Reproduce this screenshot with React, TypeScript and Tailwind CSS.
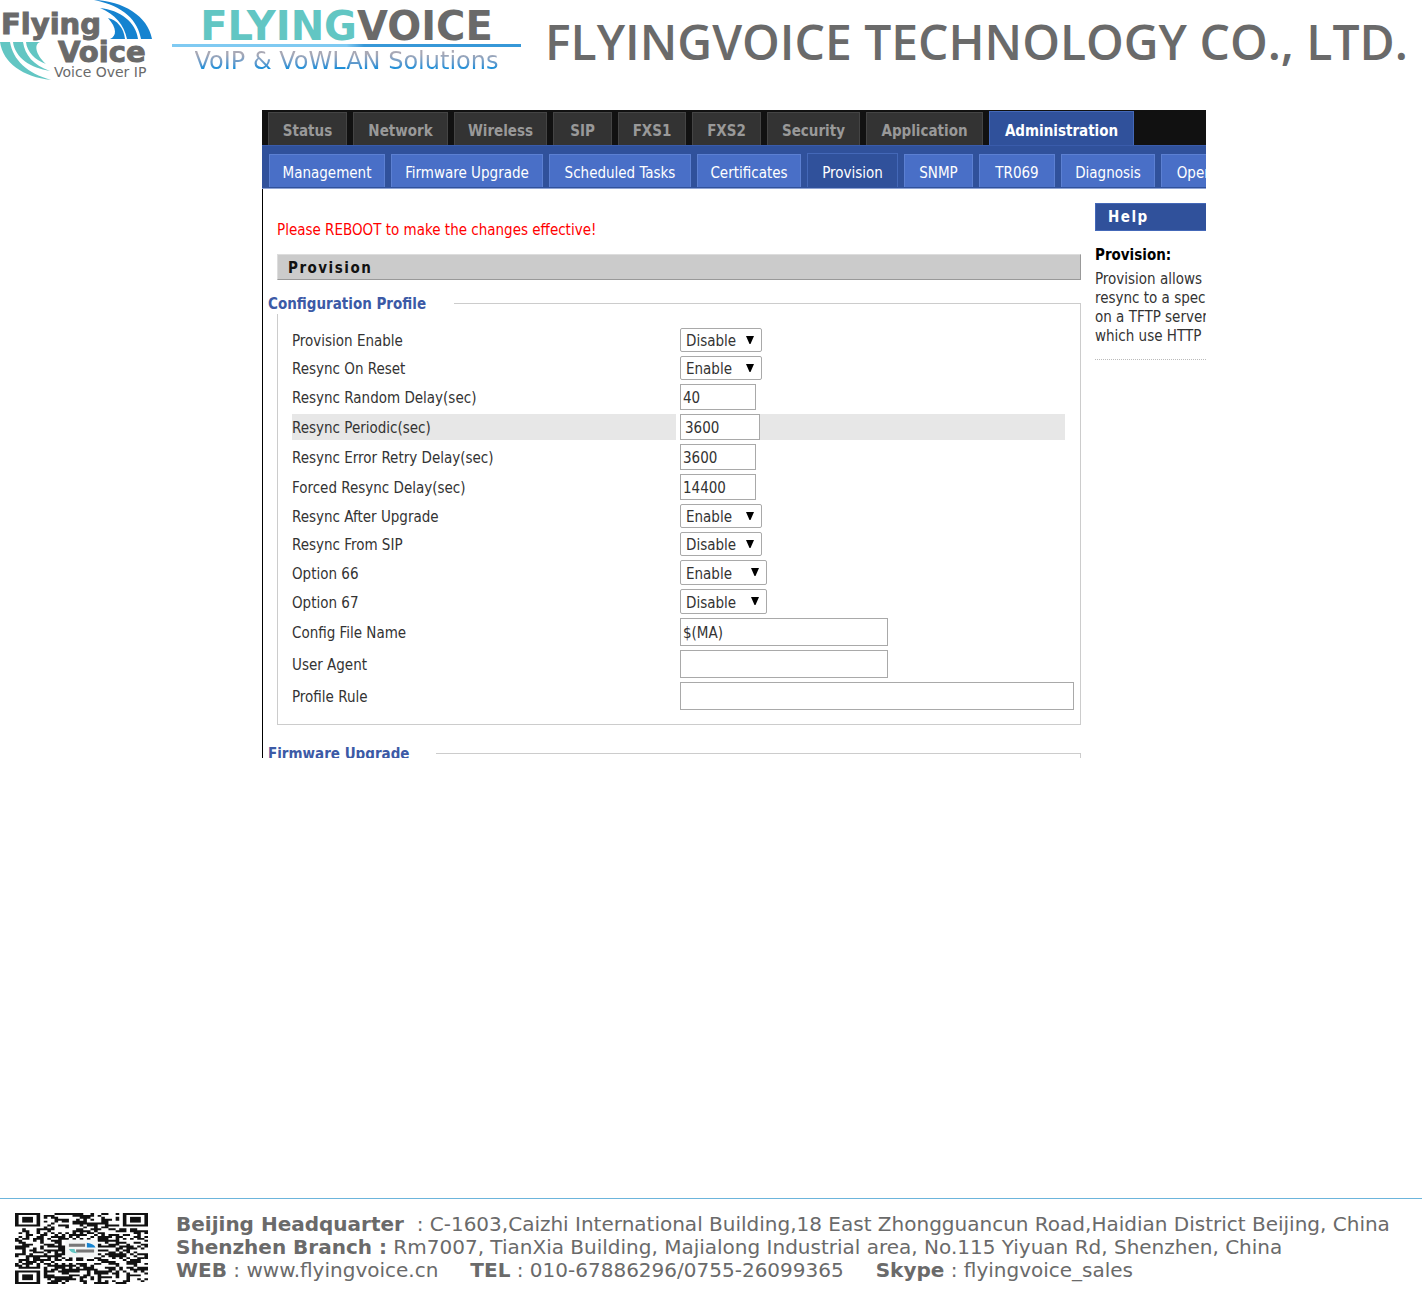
import { useState } from "react";

const mainTabs = [
  { label: "Status", width: "w-[79px]" },
  { label: "Network", width: "w-[95px]" },
  { label: "Wireless", width: "w-[93px]" },
  { label: "SIP", width: "w-[59px]" },
  { label: "FXS1", width: "w-[68px]" },
  { label: "FXS2", width: "w-[69px]" },
  { label: "Security", width: "w-[93px]" },
  { label: "Application", width: "w-[117px]" },
  { label: "Administration", width: "w-[145px]" },
];

const subTabs = [
  { label: "Management", width: "w-[116px]" },
  { label: "Firmware Upgrade", width: "w-[152px]" },
  { label: "Scheduled Tasks", width: "w-[142px]" },
  { label: "Certificates", width: "w-[104px]" },
  { label: "Provision", width: "w-[91px]" },
  { label: "SNMP", width: "w-[69px]" },
  { label: "TR069", width: "w-[76px]" },
  { label: "Diagnosis", width: "w-[94px]" },
  { label: "Operating Mode", width: "w-[140px]" },
];

type Field = {
  id: string;
  label: string;
  kind: "select" | "text";
  value: string;
  size: string;
  active?: boolean;
};

const fields: Field[] = [
  { id: "provision-enable", label: "Provision Enable", kind: "select", value: "Disable", size: "w-[82px] h-6" },
  { id: "resync-reset", label: "Resync On Reset", kind: "select", value: "Enable", size: "w-[82px] h-6" },
  { id: "resync-random", label: "Resync Random Delay(sec)", kind: "text", value: "40", size: "w-[76px] h-[26px]" },
  { id: "resync-periodic", label: "Resync Periodic(sec)", kind: "text", value: "3600", size: "w-20 h-[26px]", active: true },
  { id: "resync-error", label: "Resync Error Retry Delay(sec)", kind: "text", value: "3600", size: "w-[76px] h-[26px]" },
  { id: "forced-resync", label: "Forced Resync Delay(sec)", kind: "text", value: "14400", size: "w-[76px] h-[26px]" },
  { id: "resync-upgrade", label: "Resync After Upgrade", kind: "select", value: "Enable", size: "w-[82px] h-6" },
  { id: "resync-sip", label: "Resync From SIP", kind: "select", value: "Disable", size: "w-[82px] h-6" },
  { id: "option-66", label: "Option 66", kind: "select", value: "Enable", size: "w-[87px] h-[25px]" },
  { id: "option-67", label: "Option 67", kind: "select", value: "Disable", size: "w-[87px] h-[25px]" },
  { id: "config-file", label: "Config File Name", kind: "text", value: "$(MA)", size: "w-52 h-7" },
  { id: "user-agent", label: "User Agent", kind: "text", value: "", size: "w-52 h-7" },
  { id: "profile-rule", label: "Profile Rule", kind: "text", value: "", size: "w-[394px] h-7" },
];

function SwooshLogo() {
  return (
    <svg viewBox="0 0 156 80" className="w-[156px] h-20 shrink-0" role="img" aria-label="Flying Voice">
      <g fill="#1583d0">
        <path d="M94 0 C123 1 148 16 152 39 L141 39 C138 21 124 6 94 0Z" />
        <path d="M100 8 C120 10 136 22 138 39 L127 39 C124 25 115 14 100 8Z" />
        <path d="M108 18 C117 20 124 28 125 39 L110 39 C117 36 117 28 108 18Z" />
      </g>
      <g fill="#62c6c3">
        <path d="M0 42 L10 42 C13 60 27 73 51 80 C23 77 3 63 0 42Z" />
        <path d="M13 42 L23 42 C25 55 33 65 50 71 C31 68 15 58 13 42Z" />
        <path d="M26 42 L40 42 C34 44 35 54 46 64 C35 60 27 52 26 42Z" />
      </g>
      <g
        fill="#6a6a6a"
        stroke="#6a6a6a"
        strokeWidth="1"
        fontFamily="'DejaVu Sans', sans-serif"
        fontWeight="700"
        fontSize="29"
      >
        <text x="1" y="34">Flying</text>
        <text x="58" y="62">Voice</text>
      </g>
      <text x="54" y="77" fontSize="14" fill="#6a6a6a" fontFamily="'DejaVu Sans', sans-serif">
        Voice Over IP
      </text>
    </svg>
  );
}

function QrCode() {
  const size = 37;
  const path: string[] = [];
  let seed = 7007;
  const isFinder = (x: number, y: number) =>
    (x < 8 && y < 8) || (x > size - 9 && y < 8) || (x < 8 && y > size - 9);

  for (let y = 0; y < size; y++) {
    for (let x = 0; x < size; x++) {
      seed = (seed * 1103515245 + 12345) % 2147483648;
      const label = x > 13 && x < 23 && y > 13 && y < 23;
      if (!isFinder(x, y) && !label && seed / 2147483648 > 0.48) path.push(`M${x} ${y}h1v1h-1z`);
    }
  }

  return (
    <svg
      viewBox="0 0 37 37"
      preserveAspectRatio="none"
      className="w-[133px] h-[71px] shrink-0"
      role="img"
      aria-label="QR code"
    >
      <path d={path.join("")} fill="#111" />
      {[[0, 0], [30, 0], [0, 30]].map(([x, y]) => (
        <g key={`${x}-${y}`} fill="#111">
          <path fillRule="evenodd" d={`M${x} ${y}h7v7h-7zM${x + 1} ${y + 1}v5h5v-5z`} />
          <rect x={x + 2} y={y + 2} width="3" height="3" />
        </g>
      ))}
      <rect x="14" y="14" width="9" height="9" rx="1" fill="#f4f6f6" />
      <g fill="#777">
        <rect x="15" y="16" width="4.5" height="1.6" />
        <rect x="17" y="19" width="5" height="1.6" />
      </g>
      <path d="M20 15.5Q22 16 22.4 18H20z" fill="#1583d0" />
      <path d="M15 18.8h1.6q0 1.6 .8 2.2q-2 0-2.4-2.2z" fill="#62c6c3" />
    </svg>
  );
}

function FieldRow({ field }: { field: Field }) {
  const [value, setValue] = useState(field.value);
  const shade = field.active ? "bg-[#e7e7e7]" : "";

  return (
    <div className="flex gap-1">
      <label htmlFor={field.id} className={`w-96 shrink-0 flex items-center pt-0.5 ${shade}`}>
        {field.label}
      </label>
      <div className="flex-1 min-w-0 flex">
        {field.kind === "select" ? (
          <div className="relative">
            <select
              id={field.id}
              value={value}
              onChange={(e) => setValue(e.target.value)}
              className={`block appearance-none rounded-xs border border-[#a9a9a9] bg-white pl-[5px] pt-0.5 ${field.size}`}
            >
              <option>Enable</option>
              <option>Disable</option>
            </select>
            <svg viewBox="0 0 8 8" className="pointer-events-none absolute right-2 top-2 size-2">
              <path d="M0 0h8L4.500 8h-1z" fill="#000" />
            </svg>
          </div>
        ) : (
          <input
            id={field.id}
            type="text"
            value={value}
            onChange={(e) => setValue(e.target.value)}
            className={`block shrink-0 border border-[#a9a9a9] bg-white pt-0.5 ${field.active ? "px-1" : "px-0.5"} ${field.size}`}
          />
        )}
        {field.active && <div className="flex-1 bg-[#e7e7e7]" />}
      </div>
    </div>
  );
}

export default function App() {
  const [mainTab, setMainTab] = useState("Administration");
  const [subTab, setSubTab] = useState("Provision");

  return (
    <div className="min-h-screen flex flex-col bg-white">
      {/* Letterhead */}
      <header className="flex items-start">
        <SwooshLogo />
        <div className="ml-4 w-[349px] shrink-0 flex flex-col items-center pt-2 font-['DejaVu_Sans',sans-serif]">
          <div className="text-[40px] leading-9 font-bold text-[#6a6a6a]">
            <span className="text-[#62c6c3]">FLYING</span>VOICE
          </div>
          <div className="h-[3px] w-full bg-linear-to-r from-[#7fcaf2] from-50% to-[#3698d8] to-55%" />
          <div className="text-[24px] leading-7 bg-linear-to-b from-[#a9a9b5] from-25% to-[#1b8fd8] to-75% bg-clip-text text-transparent">
            VoIP &amp; VoWLAN Solutions
          </div>
        </div>
        <h1 className="ml-6 pt-4 text-[48px] leading-[52px] font-semibold whitespace-nowrap text-[#6a6a6a] font-['Open_Sans',sans-serif]">
          FLYINGVOICE TECHNOLOGY CO., LTD.
        </h1>
      </header>

      {/* Device admin page */}
      <main className="mt-[30px] pl-[262px] pr-[219px] text-[15px] leading-5 text-[#333] font-['DejaVu_Sans_Condensed','DejaVu_Sans',sans-serif]">
        <div className="h-[648px] overflow-hidden">
          <nav className="flex items-end gap-1.5 bg-[#111] pl-1.5 h-[35px]">
            {mainTabs.map((tab) => (
              <button
                key={tab.label}
                onClick={() => setMainTab(tab.label)}
                className={`shrink-0 pt-1 font-bold border border-b-0 ${tab.width} ${
                  tab.label === mainTab
                    ? "h-[34px] bg-[#30519b] border-[#4468b8] text-white"
                    : "h-[33px] bg-[#333] border-[#444] text-[#999]"
                }`}
              >
                {tab.label}
              </button>
            ))}
          </nav>
          <nav className="flex items-end gap-1.5 bg-[#30519b] border-t border-b border-t-[#3a5cab] border-b-[#8ea3d4] pl-[7px] pb-px h-11">
            {subTabs.map((tab) => (
              <button
                key={tab.label}
                onClick={() => setSubTab(tab.label)}
                className={`shrink-0 pt-1 text-white border border-b-0 ${tab.width} ${
                  tab.label === subTab
                    ? "h-[34px] bg-[#30519b] border-[#4468b8]"
                    : "h-[33px] bg-[#496fc7] border-[#5c80d2]"
                }`}
              >
                {tab.label}
              </button>
            ))}
          </nav>

          <div className="flex gap-3.5 border-l border-black pl-3.5">
            <section className="flex-1 min-w-0 pt-[31px]">
              <p className="text-[#ff0000]">Please REBOOT to make the changes effective!</p>
              <h2 className="mt-3.5 h-[26px] pl-2.5 leading-[26px] font-bold tracking-widest text-[#111] bg-[#cbcbcb] border border-[#ddd] border-r-[#999] border-b-[#999]">
                Provision
              </h2>
              <form>
                <fieldset className="mt-[13px] min-w-0 border border-[#ccc] pb-3.5">
                  <legend className="-ml-2.5 w-[186px] bg-white pt-px leading-5 font-bold text-[#3c5aa6]">
                    Configuration Profile
                  </legend>
                  <div className="flex flex-col gap-1 pl-3.5 pr-[15px] pt-3.5">
                    {fields.map((field) => (
                      <FieldRow key={field.id} field={field} />
                    ))}
                  </div>
                </fieldset>
                <fieldset className="mt-[18px] h-20 min-w-0 border border-[#ccc]">
                  <legend className="-ml-2.5 w-[168px] bg-white pt-px leading-5 font-bold text-[#3c5aa6]">
                    Firmware Upgrade
                  </legend>
                </fieldset>
              </form>
            </section>

            <aside className="w-[111px] shrink-0 overflow-hidden pt-3.5">
              <h2 className="w-[200px] h-7 pl-3 leading-[26px] font-bold tracking-widest text-white bg-[#30519b] border border-[#4468b8]">
                Help
              </h2>
              <h3 className="mt-3.5 font-bold text-black">Provision:</h3>
              <p className="mt-[5px] pb-[13px] leading-[19px] whitespace-nowrap border-b border-dotted border-[#bbb]">
                Provision allows
                <br />
                resync to a specific
                <br />
                on a TFTP server
                <br />
                which use HTTP
              </p>
            </aside>
          </div>
        </div>
      </main>

      {/* Contact footer */}
      <footer className="mt-auto mr-[3px] flex gap-7 border-t border-t-[#6cb5dc] pl-[15px] pt-3.5 pb-[7px] text-[#6a6a6a] font-['DejaVu_Sans',sans-serif]">
        <QrCode />
        <address className="not-italic text-[20px] leading-[23px] whitespace-nowrap">
          <p>
            <b>Beijing Headquarter</b>&nbsp; : C-1603,Caizhi International Building,18 East Zhongguancun Road,Haidian
            District Beijing, China
          </p>
          <p>
            <b>Shenzhen Branch :</b> Rm7007, TianXia Building, Majialong Industrial area, No.115 Yiyuan Rd, Shenzhen,
            China
          </p>
          <p className="flex gap-8">
            <span>
              <b>WEB</b> : <a href="#web">www.flyingvoice.cn</a>
            </span>
            <span>
              <b>TEL</b> : 010-67886296/0755-26099365
            </span>
            <span>
              <b>Skype</b> : flyingvoice_sales
            </span>
          </p>
        </address>
      </footer>
    </div>
  );
}
